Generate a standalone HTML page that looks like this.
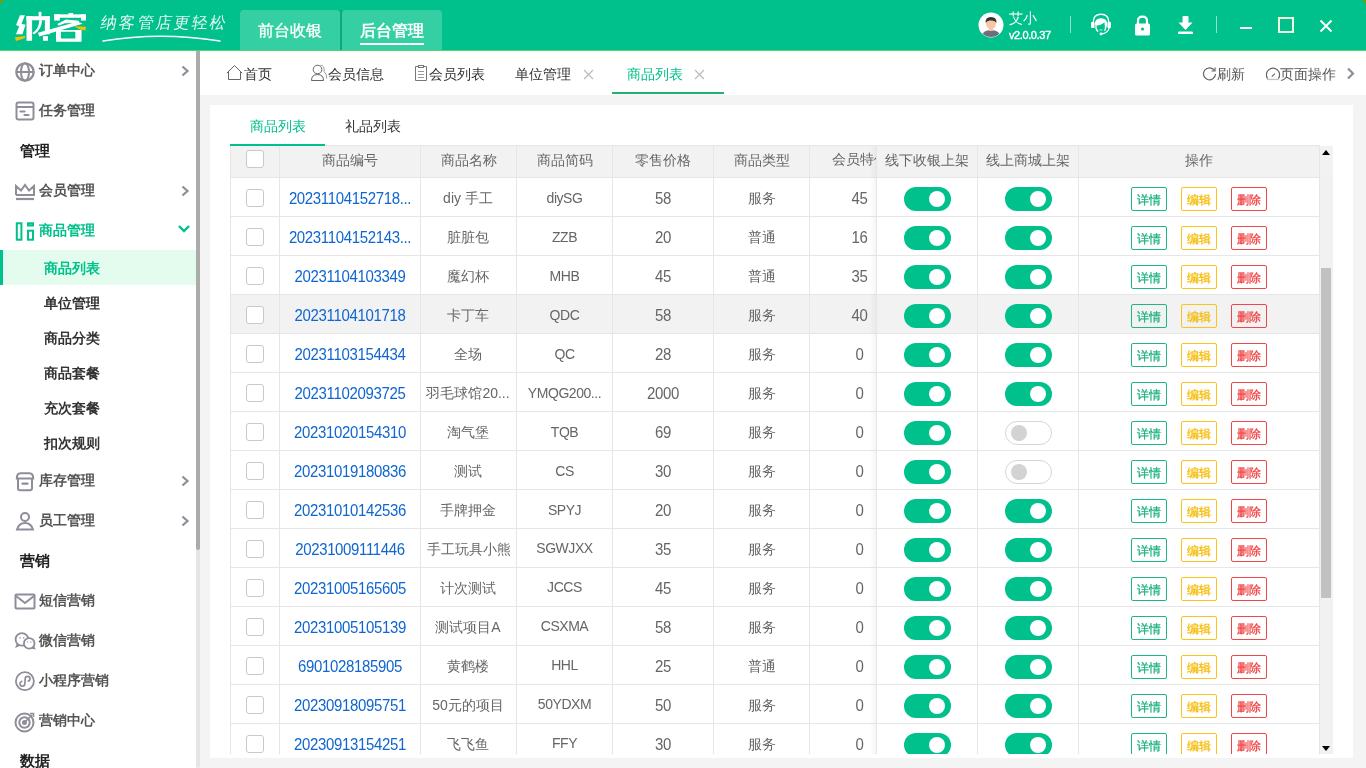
<!DOCTYPE html><html><head><meta charset="utf-8"><style>
*{box-sizing:border-box;margin:0;padding:0}
html,body{width:1366px;height:768px;overflow:hidden;background:#F4F4F4;font-family:"Liberation Sans", sans-serif;}
.a{position:absolute}
.t{position:absolute;white-space:nowrap;line-height:1}
.c{position:absolute;white-space:nowrap;overflow:hidden;text-align:center;font-size:14px;color:#666;height:38px;line-height:40px}
.n{font-size:15px;letter-spacing:-0.35px;transform:scaleY(1.1)}
.id{color:#1066D0}
.hd{position:absolute;white-space:nowrap;overflow:hidden;text-align:center;font-size:14px;color:#666;height:31px;line-height:29px;top:146px}
.cb{position:absolute;width:18px;height:18px;border:1px solid #C9C9C9;border-radius:3px;background:#fff;left:246px}
.sw{position:absolute;width:47px;height:24px;border-radius:12px;background:#00C08B}
.sw i{position:absolute;left:25px;top:4px;width:16px;height:16px;border-radius:50%;background:#fff}
.sw.off{background:#fff;border:1px solid #D6D6D6}
.sw.off i{left:5px;top:3px;background:#D3D3D3}
.bt{position:absolute;width:36px;height:24px;border:1px solid;border-radius:2px;font-size:12px;line-height:24px;text-align:center;-webkit-text-stroke:0.25px currentColor}
.b1{color:#16B07C;border-color:#1DB784}
.b2{color:#F6BA00;border-color:#F9C51A}
.b3{color:#F03A3A;border-color:#F04848}
</style></head><body><div style="position:absolute;left:0;top:0;width:1366px;height:768px;will-change:transform"><div class="a" style="left:0;top:0;width:1366px;height:50px;background:#00C08B"></div>
<div class="a" style="left:0;top:50px;width:1366px;height:1px;background:#52D46A"></div>
<div class="a" style="left:240px;top:10px;width:100px;height:40px;background:#34D0A3;border-radius:4px 4px 0 0"></div>
<div class="a" style="left:340px;top:10px;width:2px;height:40px;background:#12A67F"></div>
<div class="a" style="left:342px;top:10px;width:100px;height:40px;background:#34D0A3;border-radius:4px 4px 0 0"></div>
<div class="t" style="left:258px;top:23px;font-size:16px;color:#fff;-webkit-text-stroke:0.3px #fff">前台收银</div>
<div class="t" style="left:360px;top:23px;font-size:16px;color:#fff;font-weight:bold">后台管理</div>
<div class="a" style="left:360px;top:43px;width:64px;height:2px;background:#fff"></div>
<svg class="a" style="left:0;top:0" width="5" height="5" viewBox="0 0 5 5"><path d="M0 0 H4 L3 1 L2 1.5 L1 3 L0 4 Z" fill="#7F9800"/></svg>
<svg class="a" style="left:1361px;top:0" width="5" height="5" viewBox="0 0 5 5"><path d="M5 0 H1 L2 1 L3 1.5 L4 3 L5 4 Z" fill="#7F9800"/></svg>
<svg class="a" style="left:10px;top:5px" width="85" height="43" viewBox="0 0 1366 691"><g fill="#fff"><polygon points="160,165 240,165 185,300 250,318 200,472 95,472 148,345 98,322"/><rect x="265" y="180" width="90" height="395"/><rect x="265" y="180" width="375" height="65"/><rect x="460" y="110" width="45" height="135"/><rect x="560" y="180" width="80" height="290"/><rect x="530" y="500" width="80" height="75"/><path d="M470 245 Q470 380 360 450 L390 470 Q510 390 515 245 Z"/><rect x="940" y="128" width="75" height="40"/><rect x="710" y="150" width="510" height="55"/><rect x="710" y="150" width="90" height="100"/><rect x="1140" y="150" width="80" height="100"/><polygon points="760,305 900,235 1110,255 1105,290 880,295 785,335"/><polygon points="450,445 1090,265 1165,300 470,505"/><path d="M740 400 H1150 V590 H740 Z M820 430 V540 H1050 V430 Z" fill-rule="evenodd"/></g><g fill="#F6C000"><polygon points="80,520 245,500 235,535 95,580"/><polygon points="1030,340 1220,350 1212,410 1120,395"/></g></svg>
<div class="t" style="left:101px;top:15px;font-size:16px;color:#fff;letter-spacing:2.2px;opacity:0.9;transform:skewX(-10deg);transform-origin:0 50%">纳客管店更轻松</div>
<svg class="a" style="left:100px;top:33px" width="125" height="10" viewBox="0 0 125 10"><path d="M3 8 Q60 -1.5 120 8" stroke="#fff" stroke-width="1.5" fill="none" stroke-linecap="round"/></svg>
<svg class="a" style="left:978px;top:12px" width="26" height="26" viewBox="0 0 26 26"><circle cx="13" cy="13" r="12.5" fill="#fff"/><clipPath id="av"><circle cx="13" cy="13" r="12"/></clipPath><g clip-path="url(#av)"><path d="M3 26 Q4 18 13 18 Q22 18 23 26 Z" fill="#6E6E80"/><rect x="11" y="15" width="4" height="4" fill="#F2C4A0"/><ellipse cx="13" cy="11.5" rx="5" ry="5.5" fill="#F5C7A3"/><path d="M7.6 11 Q7 5 13 5 Q19 5 18.4 11 Q17 8 13 8.5 Q9 8 7.6 11Z" fill="#333"/></g></svg>
<div class="t" style="left:1009px;top:11px;font-size:14px;color:#fff">艾小</div>
<div class="t" style="left:1009px;top:30px;font-size:11px;color:#fff;-webkit-text-stroke:0.4px #fff;letter-spacing:-0.4px">v2.0.0.37</div>
<div class="a" style="left:1070px;top:16px;width:1px;height:17px;background:rgba(255,255,255,0.55)"></div>
<div class="a" style="left:1216px;top:16px;width:1px;height:17px;background:rgba(255,255,255,0.55)"></div>
<svg class="a" style="left:1085px;top:10px" width="32" height="30" viewBox="0 0 32 30" fill="none" stroke="#fff"><path d="M8.3 12 Q8.3 4.2 16 4.2 Q23.7 4.2 23.7 12" stroke-width="1.4"/><rect x="6" y="12" width="3.6" height="6" rx="1" fill="#fff" stroke="none"/><rect x="22.4" y="12" width="3.6" height="6" rx="1" fill="#fff" stroke="none"/><path d="M9.8 14.5 Q9.8 8.3 16 8.3 Q22.2 8.3 22.2 14.5 L20.8 19.5 Q20.3 15 19.3 12.3 Q17 15.2 11 15.8 Z" fill="#fff" stroke="none"/><path d="M11 15.5 Q10.6 19.8 13.2 21.6" stroke-width="1.3"/><path d="M20.3 14 Q21 19 19.6 20.8" stroke-width="1.3"/><path d="M14.4 19.8 Q16 20.6 17.6 19.8" stroke-width="0.7"/><path d="M24.2 17.5 Q23.5 23.2 16.2 24" stroke-width="1.3"/><circle cx="16" cy="24" r="1.4" fill="#fff" stroke="none"/></svg>
<svg class="a" style="left:1134px;top:15px" width="17" height="21" viewBox="0 0 17 21"><path d="M4 9 V6 Q4 1.6 8.5 1.6 Q13 1.6 13 6 V9" stroke="#fff" stroke-width="2.2" fill="none"/><rect x="1" y="8.5" width="15" height="12" rx="1.5" fill="#fff"/><circle cx="8.5" cy="14" r="1.6" fill="#00C08B"/></svg>
<svg class="a" style="left:1177px;top:15px" width="17" height="20" viewBox="0 0 17 20" fill="#fff"><rect x="5.5" y="1" width="6" height="7" rx="1"/><path d="M1.5 7.5 H15.5 L8.5 15 Z"/><rect x="1" y="16.5" width="15" height="2.6" rx="1.2"/></svg>
<div class="a" style="left:1240px;top:27px;width:12px;height:2px;background:#fff"></div>
<div class="a" style="left:1278px;top:17px;width:16px;height:16px;border:2px solid #F3F9DA"></div>
<svg class="a" style="left:1319px;top:19px" width="14" height="14" viewBox="0 0 14 14" stroke="#fff" stroke-width="2"><path d="M1.5 1.5 L12.5 12.5 M12.5 1.5 L1.5 12.5"/></svg>
<div class="a" style="left:0;top:51px;width:196px;height:717px;background:#fff"></div>
<div class="a" style="left:196px;top:51px;width:4px;height:717px;background:#E5E5E5;border-radius:2px"></div>
<div class="a" style="left:196px;top:51px;width:4px;height:499px;background:#ABABAB;border-radius:0 0 2px 2px"></div>
<svg class="a" style="left:15px;top:62px" width="20" height="20" viewBox="0 0 20 20" fill="none" stroke="#8E8D99" stroke-width="2"><circle cx="10" cy="10" r="8.7" stroke-width="2.3"/><ellipse cx="10" cy="10" rx="4" ry="8.7" stroke-width="2"/><path d="M1.5 10 H18.5" stroke-width="2"/></svg>
<div class="t" style="left:39px;top:63px;font-size:14px;color:#555;font-weight:bold">订单中心</div>
<svg class="a" style="left:180px;top:65px" width="10" height="12" viewBox="0 0 10 12" fill="none" stroke="#8E8D99" stroke-width="2.2"><path d="M2.5 1.5 L7.5 6 L2.5 10.5"/></svg>
<svg class="a" style="left:15px;top:101px" width="20" height="20" viewBox="0 0 20 20" fill="none" stroke="#8E8D99" stroke-width="2"><rect x="1.5" y="1.5" width="17" height="17" rx="2"/><path d="M1.5 6 H18.5"/><path d="M5.5 10.5 H9.5" stroke-width="2.2" stroke-linecap="round"/><path d="M9.5 14 H13.5" stroke-width="2.2" stroke-linecap="round"/></svg>
<div class="t" style="left:39px;top:103px;font-size:14px;color:#555;font-weight:bold">任务管理</div>
<div class="t" style="left:20px;top:143px;font-size:15px;color:#222;font-weight:bold">管理</div>
<svg class="a" style="left:14px;top:183px" width="22" height="18" viewBox="0 0 22 18" fill="none" stroke="#8E8D99" stroke-width="2"><path d="M2 12 V3 L7 7.5 L11 2 L15 7.5 L20 3 V12 H2"/><path d="M2 16 H20" stroke-width="2.2"/></svg>
<div class="t" style="left:39px;top:183px;font-size:14px;color:#555;font-weight:bold">会员管理</div>
<svg class="a" style="left:180px;top:185px" width="10" height="12" viewBox="0 0 10 12" fill="none" stroke="#8E8D99" stroke-width="2.2"><path d="M2.5 1.5 L7.5 6 L2.5 10.5"/></svg>
<svg class="a" style="left:15px;top:221px" width="20" height="21" viewBox="0 0 20 21" fill="none" stroke="#00C08B" stroke-width="2"><rect x="1.8" y="2.3" width="4.6" height="16.4"/><rect x="13" y="2.3" width="5" height="2.2"/><rect x="13" y="9.7" width="5" height="9"/></svg>
<div class="t" style="left:39px;top:223px;font-size:14px;color:#00C08B;font-weight:bold">商品管理</div>
<svg class="a" style="left:177px;top:224px" width="14" height="10" viewBox="0 0 14 10" fill="none" stroke="#00C08B" stroke-width="2.4"><path d="M2 2 L7 7 L12 2"/></svg>
<div class="a" style="left:0;top:250px;width:196px;height:35px;background:#E3FCEE"></div>
<div class="a" style="left:0;top:250px;width:3px;height:35px;background:#00C08B"></div>
<div class="t" style="left:44px;top:261px;font-size:14px;color:#00C08B;font-weight:bold">商品列表</div>
<div class="t" style="left:44px;top:296px;font-size:14px;color:#333;font-weight:bold">单位管理</div>
<div class="t" style="left:44px;top:331px;font-size:14px;color:#333;font-weight:bold">商品分类</div>
<div class="t" style="left:44px;top:366px;font-size:14px;color:#333;font-weight:bold">商品套餐</div>
<div class="t" style="left:44px;top:401px;font-size:14px;color:#333;font-weight:bold">充次套餐</div>
<div class="t" style="left:44px;top:436px;font-size:14px;color:#333;font-weight:bold">扣次规则</div>
<svg class="a" style="left:15px;top:471px" width="20" height="21" viewBox="0 0 20 21" fill="none" stroke="#8E8D99" stroke-width="2"><path d="M1.8 7.6 Q1.8 2.2 5.5 2.2 H14.5 Q18.2 2.2 18.2 7.6 Z"/><path d="M3 7.6 V17.2 Q3 19.2 5 19.2 H15 Q17 19.2 17 17.2 V7.6"/><path d="M7.6 12.6 H12.4" stroke-width="2.4" stroke-linecap="round"/></svg>
<div class="t" style="left:39px;top:473px;font-size:14px;color:#555;font-weight:bold">库存管理</div>
<svg class="a" style="left:180px;top:475px" width="10" height="12" viewBox="0 0 10 12" fill="none" stroke="#8E8D99" stroke-width="2.2"><path d="M2.5 1.5 L7.5 6 L2.5 10.5"/></svg>
<svg class="a" style="left:15px;top:511px" width="20" height="20" viewBox="0 0 20 20" fill="none" stroke="#8E8D99" stroke-width="2"><circle cx="10" cy="6" r="4"/><path d="M2 18.5 Q4 12 10 12 Q16 12 18 18.5 Z"/></svg>
<div class="t" style="left:39px;top:513px;font-size:14px;color:#555;font-weight:bold">员工管理</div>
<svg class="a" style="left:180px;top:515px" width="10" height="12" viewBox="0 0 10 12" fill="none" stroke="#8E8D99" stroke-width="2.2"><path d="M2.5 1.5 L7.5 6 L2.5 10.5"/></svg>
<div class="t" style="left:20px;top:553px;font-size:15px;color:#222;font-weight:bold">营销</div>
<svg class="a" style="left:14px;top:593px" width="22" height="17" viewBox="0 0 22 17" fill="none" stroke="#8E8D99" stroke-width="2"><rect x="1.5" y="1.5" width="19" height="14" rx="1"/><path d="M2 3 L11 10 L20 3"/></svg>
<div class="t" style="left:39px;top:593px;font-size:14px;color:#555;font-weight:bold">短信营销</div>
<svg class="a" style="left:14px;top:631px" width="22" height="19" viewBox="0 0 22 19" fill="none" stroke="#8E8D99" stroke-width="2"><circle cx="7.9" cy="8.4" r="6.3" stroke-width="1.8"/><path d="M3.5 13 L2.5 15.5 L6 14" stroke-width="1.6"/><circle cx="15.2" cy="12.4" r="5.3" fill="#fff" stroke-width="1.8"/><path d="M19.5 15.5 L20.5 17.5 L18 17" stroke-width="1.5"/><path d="M5.5 6.8 H6.8 M9 6.8 H10.3 M13 11 H14.2 M16.3 11 H17.5" stroke-width="1.2"/></svg>
<div class="t" style="left:39px;top:633px;font-size:14px;color:#555;font-weight:bold">微信营销</div>
<svg class="a" style="left:14px;top:670px" width="22" height="22" viewBox="0 0 22 22" fill="none" stroke="#8E8D99" stroke-width="2"><circle cx="10.9" cy="11.2" r="9" stroke-width="1.8"/><path d="M8.4 11.3 A2.4 2.4 0 1 0 10.8 13.7 L11.2 8.8 A2.4 2.4 0 1 1 13.6 11.2" stroke-width="1.7"/></svg>
<div class="t" style="left:39px;top:673px;font-size:14px;color:#555;font-weight:bold">小程序营销</div>
<svg class="a" style="left:14px;top:711px" width="22" height="22" viewBox="0 0 22 22" fill="none" stroke="#8E8D99" stroke-width="2"><circle cx="10.5" cy="11.5" r="9"/><circle cx="10.5" cy="11.5" r="5.2"/><circle cx="10.5" cy="11.5" r="1.5" fill="#8E8D99"/><path d="M10.5 11.5 L18 4" stroke-width="1.6"/><path d="M16 2.5 L19.5 2.5 L19.5 6" stroke-width="1.6"/></svg>
<div class="t" style="left:39px;top:713px;font-size:14px;color:#555;font-weight:bold">营销中心</div>
<div class="t" style="left:20px;top:753px;font-size:15px;color:#222;font-weight:bold">数据</div>
<div class="a" style="left:200px;top:51px;width:1166px;height:44px;background:#fff"></div>
<svg class="a" style="left:226px;top:64px" width="18" height="17" viewBox="0 0 18 17" fill="none" stroke="#666" stroke-width="1"><path d="M0.8 9.2 L8.5 1.5 L16.2 9.2"/><path d="M2.5 7.5 V15.5 H14.5 V7.5"/></svg>
<div class="t" style="left:244px;top:67px;font-size:14px;color:#333">首页</div>
<svg class="a" style="left:310px;top:64px" width="18" height="17" viewBox="0 0 18 17" fill="none" stroke="#666" stroke-width="1"><circle cx="7.5" cy="5.5" r="4.3"/><path d="M1.5 16.5 Q1.5 10.5 7.5 10.5 Q13.5 10.5 13.5 16.5 Z"/><path d="M10.5 1.3 Q15 1.5 14 7.5 Q16.8 10 16.8 14.5" stroke="#999"/></svg>
<div class="t" style="left:328px;top:67px;font-size:14px;color:#333">会员信息</div>
<svg class="a" style="left:414px;top:64px" width="14" height="17" viewBox="0 0 14 17" fill="none" stroke="#777" stroke-width="1"><path d="M4 2.5 H1.5 V16.5 H12.5 V2.5 H10"/><rect x="4.5" y="1.5" width="5" height="2"/><path d="M4 7.5 H10 M4 10.5 H10 M4 13.5 H10" stroke="#999"/></svg>
<div class="t" style="left:429px;top:67px;font-size:14px;color:#333">会员列表</div>
<div class="t" style="left:515px;top:67px;font-size:14px;color:#333">单位管理</div>
<svg class="a" style="left:583px;top:69px" width="11" height="11" viewBox="0 0 11 11" stroke="#BBB" stroke-width="1.2"><path d="M1 1 L10 10 M10 1 L1 10"/></svg>
<div class="t" style="left:627px;top:67px;font-size:14px;color:#00C08B">商品列表</div>
<svg class="a" style="left:694px;top:69px" width="11" height="11" viewBox="0 0 11 11" stroke="#BBB" stroke-width="1.2"><path d="M1 1 L10 10 M10 1 L1 10"/></svg>
<div class="a" style="left:612px;top:92px;width:112px;height:2px;background:#1DB36E"></div>
<svg class="a" style="left:1202px;top:66px" width="15" height="15" viewBox="0 0 15 15" fill="none" stroke="#666" stroke-width="1.2"><path d="M12.5 4.5 A6 6 0 1 0 13.5 8"/><path d="M13 1.5 V5 H9.5"/></svg>
<div class="t" style="left:1217px;top:67px;font-size:14px;color:#555">刷新</div>
<svg class="a" style="left:1265px;top:66px" width="16" height="15" viewBox="0 0 16 15" fill="none" stroke="#666" stroke-width="1.2"><path d="M2.6 12.6 A6.6 6.6 0 1 1 13.4 12.6"/><path d="M2 13.4 H14" stroke="#c4c4c4" stroke-width="1.4"/><path d="M6.8 10.6 L10 7.6"/></svg>
<div class="t" style="left:1280px;top:67px;font-size:14px;color:#555">页面操作</div>
<svg class="a" style="left:1345px;top:67px" width="11" height="13" viewBox="0 0 11 13" fill="none" stroke="#8E8D99" stroke-width="2.2"><path d="M3 1.5 L8 6.5 L3 11.5"/></svg>
<div class="a" style="left:210px;top:105px;width:1143px;height:653px;background:#fff"></div>
<div class="t" style="left:250px;top:119px;font-size:14px;color:#00C08B">商品列表</div>
<div class="t" style="left:345px;top:119px;font-size:14px;color:#333">礼品列表</div>
<div class="a" style="left:230px;top:146px;width:1090px;height:31px;background:#F2F2F2"></div>
<div class="a" style="left:230px;top:145px;width:1090px;height:1px;background:#E6E6E6"></div>
<div class="a" style="left:230px;top:144px;width:95px;height:2px;background:#00C08B"></div>
<div class="a" style="left:230px;top:295px;width:1090px;height:38px;background:#F2F2F2"></div>
<div class="a" style="left:230px;top:216px;width:1090px;height:1px;background:#E6E6E6"></div>
<div class="a" style="left:230px;top:255px;width:1090px;height:1px;background:#E6E6E6"></div>
<div class="a" style="left:230px;top:294px;width:1090px;height:1px;background:#E6E6E6"></div>
<div class="a" style="left:230px;top:333px;width:1090px;height:1px;background:#E6E6E6"></div>
<div class="a" style="left:230px;top:372px;width:1090px;height:1px;background:#E6E6E6"></div>
<div class="a" style="left:230px;top:411px;width:1090px;height:1px;background:#E6E6E6"></div>
<div class="a" style="left:230px;top:450px;width:1090px;height:1px;background:#E6E6E6"></div>
<div class="a" style="left:230px;top:489px;width:1090px;height:1px;background:#E6E6E6"></div>
<div class="a" style="left:230px;top:528px;width:1090px;height:1px;background:#E6E6E6"></div>
<div class="a" style="left:230px;top:567px;width:1090px;height:1px;background:#E6E6E6"></div>
<div class="a" style="left:230px;top:606px;width:1090px;height:1px;background:#E6E6E6"></div>
<div class="a" style="left:230px;top:645px;width:1090px;height:1px;background:#E6E6E6"></div>
<div class="a" style="left:230px;top:684px;width:1090px;height:1px;background:#E6E6E6"></div>
<div class="a" style="left:230px;top:723px;width:1090px;height:1px;background:#E6E6E6"></div>
<div class="a" style="left:230px;top:177px;width:1090px;height:1px;background:#E6E6E6"></div>
<div class="a" style="left:230px;top:146px;width:1px;height:608px;background:#E6E6E6"></div>
<div class="a" style="left:279px;top:146px;width:1px;height:608px;background:#E6E6E6"></div>
<div class="a" style="left:420px;top:146px;width:1px;height:608px;background:#E6E6E6"></div>
<div class="a" style="left:516px;top:146px;width:1px;height:608px;background:#E6E6E6"></div>
<div class="a" style="left:612px;top:146px;width:1px;height:608px;background:#E6E6E6"></div>
<div class="a" style="left:713px;top:146px;width:1px;height:608px;background:#E6E6E6"></div>
<div class="a" style="left:809px;top:146px;width:1px;height:608px;background:#E6E6E6"></div>
<div class="a" style="left:876px;top:146px;width:1px;height:608px;background:#E6E6E6"></div>
<div class="a" style="left:977px;top:146px;width:1px;height:608px;background:#E6E6E6"></div>
<div class="a" style="left:1078px;top:146px;width:1px;height:608px;background:#E6E6E6"></div>
<div class="a" style="left:1319px;top:146px;width:1px;height:608px;background:#E6E6E6"></div>
<div class="hd" style="left:280px;width:140px">商品编号</div>
<div class="hd" style="left:421px;width:95px">商品名称</div>
<div class="hd" style="left:517px;width:95px">商品简码</div>
<div class="hd" style="left:613px;width:100px">零售价格</div>
<div class="hd" style="left:714px;width:95px">商品类型</div>
<div class="t" style="left:832px;top:152px;font-size:14px;color:#666">会员特价</div>
<div class="cb" style="top:150px"></div>
<div class="a" style="left:870px;top:146px;width:6px;height:608px;background:linear-gradient(to right,rgba(0,0,0,0),rgba(0,0,0,0.04))"></div>
<div class="a" style="left:876px;top:146px;width:443px;height:31px;background:#F2F2F2"></div>
<div class="a" style="left:876px;top:178px;width:443px;height:576px;background:#fff"></div>
<div class="a" style="left:876px;top:295px;width:443px;height:38px;background:#F2F2F2"></div>
<div class="a" style="left:876px;top:177px;width:443px;height:1px;background:#E6E6E6"></div>
<div class="a" style="left:876px;top:216px;width:443px;height:1px;background:#E6E6E6"></div>
<div class="a" style="left:876px;top:255px;width:443px;height:1px;background:#E6E6E6"></div>
<div class="a" style="left:876px;top:294px;width:443px;height:1px;background:#E6E6E6"></div>
<div class="a" style="left:876px;top:333px;width:443px;height:1px;background:#E6E6E6"></div>
<div class="a" style="left:876px;top:372px;width:443px;height:1px;background:#E6E6E6"></div>
<div class="a" style="left:876px;top:411px;width:443px;height:1px;background:#E6E6E6"></div>
<div class="a" style="left:876px;top:450px;width:443px;height:1px;background:#E6E6E6"></div>
<div class="a" style="left:876px;top:489px;width:443px;height:1px;background:#E6E6E6"></div>
<div class="a" style="left:876px;top:528px;width:443px;height:1px;background:#E6E6E6"></div>
<div class="a" style="left:876px;top:567px;width:443px;height:1px;background:#E6E6E6"></div>
<div class="a" style="left:876px;top:606px;width:443px;height:1px;background:#E6E6E6"></div>
<div class="a" style="left:876px;top:645px;width:443px;height:1px;background:#E6E6E6"></div>
<div class="a" style="left:876px;top:684px;width:443px;height:1px;background:#E6E6E6"></div>
<div class="a" style="left:876px;top:723px;width:443px;height:1px;background:#E6E6E6"></div>
<div class="a" style="left:876px;top:146px;width:1px;height:608px;background:#E6E6E6"></div>
<div class="a" style="left:977px;top:146px;width:1px;height:608px;background:#E6E6E6"></div>
<div class="a" style="left:1078px;top:146px;width:1px;height:608px;background:#E6E6E6"></div>
<div class="a" style="left:1319px;top:146px;width:1px;height:608px;background:#E6E6E6"></div>
<div class="hd" style="left:877px;width:100px">线下收银上架</div>
<div class="hd" style="left:978px;width:100px">线上商城上架</div>
<div class="hd" style="left:1079px;width:240px">操作</div>
<div class="cb" style="top:189px"></div>
<div class="c n id" style="left:280px;top:178px;width:140px">20231104152718...</div>
<div class="c" style="left:421px;top:178px;width:94px">diy 手工</div>
<div class="c n" style="left:517px;top:178px;width:95px;font-size:14px;letter-spacing:-0.45px;line-height:38px">diySG</div>
<div class="c n" style="left:613px;top:178px;width:100px">58</div>
<div class="c" style="left:714px;top:178px;width:95px">服务</div>
<div class="c n" style="left:810px;top:178px;width:99px">45</div>
<div class="sw" style="left:904px;top:187px"><i></i></div>
<div class="sw" style="left:1005px;top:187px"><i></i></div>
<div class="bt b1" style="left:1131px;top:187px">详情</div>
<div class="bt b2" style="left:1181px;top:187px">编辑</div>
<div class="bt b3" style="left:1231px;top:187px">删除</div>
<div class="cb" style="top:228px"></div>
<div class="c n id" style="left:280px;top:217px;width:140px">20231104152143...</div>
<div class="c" style="left:421px;top:217px;width:94px">脏脏包</div>
<div class="c n" style="left:517px;top:217px;width:95px;font-size:14px;letter-spacing:-0.45px;line-height:38px">ZZB</div>
<div class="c n" style="left:613px;top:217px;width:100px">20</div>
<div class="c" style="left:714px;top:217px;width:95px">普通</div>
<div class="c n" style="left:810px;top:217px;width:99px">16</div>
<div class="sw" style="left:904px;top:226px"><i></i></div>
<div class="sw" style="left:1005px;top:226px"><i></i></div>
<div class="bt b1" style="left:1131px;top:226px">详情</div>
<div class="bt b2" style="left:1181px;top:226px">编辑</div>
<div class="bt b3" style="left:1231px;top:226px">删除</div>
<div class="cb" style="top:267px"></div>
<div class="c n id" style="left:280px;top:256px;width:140px">20231104103349</div>
<div class="c" style="left:421px;top:256px;width:94px">魔幻杯</div>
<div class="c n" style="left:517px;top:256px;width:95px;font-size:14px;letter-spacing:-0.45px;line-height:38px">MHB</div>
<div class="c n" style="left:613px;top:256px;width:100px">45</div>
<div class="c" style="left:714px;top:256px;width:95px">普通</div>
<div class="c n" style="left:810px;top:256px;width:99px">35</div>
<div class="sw" style="left:904px;top:265px"><i></i></div>
<div class="sw" style="left:1005px;top:265px"><i></i></div>
<div class="bt b1" style="left:1131px;top:265px">详情</div>
<div class="bt b2" style="left:1181px;top:265px">编辑</div>
<div class="bt b3" style="left:1231px;top:265px">删除</div>
<div class="cb" style="top:306px"></div>
<div class="c n id" style="left:280px;top:295px;width:140px">20231104101718</div>
<div class="c" style="left:421px;top:295px;width:94px">卡丁车</div>
<div class="c n" style="left:517px;top:295px;width:95px;font-size:14px;letter-spacing:-0.45px;line-height:38px">QDC</div>
<div class="c n" style="left:613px;top:295px;width:100px">58</div>
<div class="c" style="left:714px;top:295px;width:95px">服务</div>
<div class="c n" style="left:810px;top:295px;width:99px">40</div>
<div class="sw" style="left:904px;top:304px"><i></i></div>
<div class="sw" style="left:1005px;top:304px"><i></i></div>
<div class="bt b1" style="left:1131px;top:304px">详情</div>
<div class="bt b2" style="left:1181px;top:304px">编辑</div>
<div class="bt b3" style="left:1231px;top:304px">删除</div>
<div class="cb" style="top:345px"></div>
<div class="c n id" style="left:280px;top:334px;width:140px">20231103154434</div>
<div class="c" style="left:421px;top:334px;width:94px">全场</div>
<div class="c n" style="left:517px;top:334px;width:95px;font-size:14px;letter-spacing:-0.45px;line-height:38px">QC</div>
<div class="c n" style="left:613px;top:334px;width:100px">28</div>
<div class="c" style="left:714px;top:334px;width:95px">服务</div>
<div class="c n" style="left:810px;top:334px;width:99px">0</div>
<div class="sw" style="left:904px;top:343px"><i></i></div>
<div class="sw" style="left:1005px;top:343px"><i></i></div>
<div class="bt b1" style="left:1131px;top:343px">详情</div>
<div class="bt b2" style="left:1181px;top:343px">编辑</div>
<div class="bt b3" style="left:1231px;top:343px">删除</div>
<div class="cb" style="top:384px"></div>
<div class="c n id" style="left:280px;top:373px;width:140px">20231102093725</div>
<div class="c" style="left:421px;top:373px;width:94px">羽毛球馆20...</div>
<div class="c n" style="left:517px;top:373px;width:95px;font-size:14px;letter-spacing:-0.45px;line-height:38px">YMQG200...</div>
<div class="c n" style="left:613px;top:373px;width:100px">2000</div>
<div class="c" style="left:714px;top:373px;width:95px">服务</div>
<div class="c n" style="left:810px;top:373px;width:99px">0</div>
<div class="sw" style="left:904px;top:382px"><i></i></div>
<div class="sw" style="left:1005px;top:382px"><i></i></div>
<div class="bt b1" style="left:1131px;top:382px">详情</div>
<div class="bt b2" style="left:1181px;top:382px">编辑</div>
<div class="bt b3" style="left:1231px;top:382px">删除</div>
<div class="cb" style="top:423px"></div>
<div class="c n id" style="left:280px;top:412px;width:140px">20231020154310</div>
<div class="c" style="left:421px;top:412px;width:94px">淘气堡</div>
<div class="c n" style="left:517px;top:412px;width:95px;font-size:14px;letter-spacing:-0.45px;line-height:38px">TQB</div>
<div class="c n" style="left:613px;top:412px;width:100px">69</div>
<div class="c" style="left:714px;top:412px;width:95px">服务</div>
<div class="c n" style="left:810px;top:412px;width:99px">0</div>
<div class="sw" style="left:904px;top:421px"><i></i></div>
<div class="sw off" style="left:1005px;top:421px"><i></i></div>
<div class="bt b1" style="left:1131px;top:421px">详情</div>
<div class="bt b2" style="left:1181px;top:421px">编辑</div>
<div class="bt b3" style="left:1231px;top:421px">删除</div>
<div class="cb" style="top:462px"></div>
<div class="c n id" style="left:280px;top:451px;width:140px">20231019180836</div>
<div class="c" style="left:421px;top:451px;width:94px">测试</div>
<div class="c n" style="left:517px;top:451px;width:95px;font-size:14px;letter-spacing:-0.45px;line-height:38px">CS</div>
<div class="c n" style="left:613px;top:451px;width:100px">30</div>
<div class="c" style="left:714px;top:451px;width:95px">服务</div>
<div class="c n" style="left:810px;top:451px;width:99px">0</div>
<div class="sw" style="left:904px;top:460px"><i></i></div>
<div class="sw off" style="left:1005px;top:460px"><i></i></div>
<div class="bt b1" style="left:1131px;top:460px">详情</div>
<div class="bt b2" style="left:1181px;top:460px">编辑</div>
<div class="bt b3" style="left:1231px;top:460px">删除</div>
<div class="cb" style="top:501px"></div>
<div class="c n id" style="left:280px;top:490px;width:140px">20231010142536</div>
<div class="c" style="left:421px;top:490px;width:94px">手牌押金</div>
<div class="c n" style="left:517px;top:490px;width:95px;font-size:14px;letter-spacing:-0.45px;line-height:38px">SPYJ</div>
<div class="c n" style="left:613px;top:490px;width:100px">20</div>
<div class="c" style="left:714px;top:490px;width:95px">服务</div>
<div class="c n" style="left:810px;top:490px;width:99px">0</div>
<div class="sw" style="left:904px;top:499px"><i></i></div>
<div class="sw" style="left:1005px;top:499px"><i></i></div>
<div class="bt b1" style="left:1131px;top:499px">详情</div>
<div class="bt b2" style="left:1181px;top:499px">编辑</div>
<div class="bt b3" style="left:1231px;top:499px">删除</div>
<div class="cb" style="top:540px"></div>
<div class="c n id" style="left:280px;top:529px;width:140px">20231009111446</div>
<div class="c" style="left:427px;top:529px;width:85px;text-align:left">手工玩具小熊</div>
<div class="c n" style="left:517px;top:529px;width:95px;font-size:14px;letter-spacing:-0.45px;line-height:38px">SGWJXX</div>
<div class="c n" style="left:613px;top:529px;width:100px">35</div>
<div class="c" style="left:714px;top:529px;width:95px">服务</div>
<div class="c n" style="left:810px;top:529px;width:99px">0</div>
<div class="sw" style="left:904px;top:538px"><i></i></div>
<div class="sw" style="left:1005px;top:538px"><i></i></div>
<div class="bt b1" style="left:1131px;top:538px">详情</div>
<div class="bt b2" style="left:1181px;top:538px">编辑</div>
<div class="bt b3" style="left:1231px;top:538px">删除</div>
<div class="cb" style="top:579px"></div>
<div class="c n id" style="left:280px;top:568px;width:140px">20231005165605</div>
<div class="c" style="left:421px;top:568px;width:94px">计次测试</div>
<div class="c n" style="left:517px;top:568px;width:95px;font-size:14px;letter-spacing:-0.45px;line-height:38px">JCCS</div>
<div class="c n" style="left:613px;top:568px;width:100px">45</div>
<div class="c" style="left:714px;top:568px;width:95px">服务</div>
<div class="c n" style="left:810px;top:568px;width:99px">0</div>
<div class="sw" style="left:904px;top:577px"><i></i></div>
<div class="sw" style="left:1005px;top:577px"><i></i></div>
<div class="bt b1" style="left:1131px;top:577px">详情</div>
<div class="bt b2" style="left:1181px;top:577px">编辑</div>
<div class="bt b3" style="left:1231px;top:577px">删除</div>
<div class="cb" style="top:618px"></div>
<div class="c n id" style="left:280px;top:607px;width:140px">20231005105139</div>
<div class="c" style="left:421px;top:607px;width:94px">测试项目A</div>
<div class="c n" style="left:517px;top:607px;width:95px;font-size:14px;letter-spacing:-0.45px;line-height:38px">CSXMA</div>
<div class="c n" style="left:613px;top:607px;width:100px">58</div>
<div class="c" style="left:714px;top:607px;width:95px">服务</div>
<div class="c n" style="left:810px;top:607px;width:99px">0</div>
<div class="sw" style="left:904px;top:616px"><i></i></div>
<div class="sw" style="left:1005px;top:616px"><i></i></div>
<div class="bt b1" style="left:1131px;top:616px">详情</div>
<div class="bt b2" style="left:1181px;top:616px">编辑</div>
<div class="bt b3" style="left:1231px;top:616px">删除</div>
<div class="cb" style="top:657px"></div>
<div class="c n id" style="left:280px;top:646px;width:140px">6901028185905</div>
<div class="c" style="left:421px;top:646px;width:94px">黄鹤楼</div>
<div class="c n" style="left:517px;top:646px;width:95px;font-size:14px;letter-spacing:-0.45px;line-height:38px">HHL</div>
<div class="c n" style="left:613px;top:646px;width:100px">25</div>
<div class="c" style="left:714px;top:646px;width:95px">普通</div>
<div class="c n" style="left:810px;top:646px;width:99px">0</div>
<div class="sw" style="left:904px;top:655px"><i></i></div>
<div class="sw" style="left:1005px;top:655px"><i></i></div>
<div class="bt b1" style="left:1131px;top:655px">详情</div>
<div class="bt b2" style="left:1181px;top:655px">编辑</div>
<div class="bt b3" style="left:1231px;top:655px">删除</div>
<div class="cb" style="top:696px"></div>
<div class="c n id" style="left:280px;top:685px;width:140px">20230918095751</div>
<div class="c" style="left:421px;top:685px;width:94px">50元的项目</div>
<div class="c n" style="left:517px;top:685px;width:95px;font-size:14px;letter-spacing:-0.45px;line-height:38px">50YDXM</div>
<div class="c n" style="left:613px;top:685px;width:100px">50</div>
<div class="c" style="left:714px;top:685px;width:95px">服务</div>
<div class="c n" style="left:810px;top:685px;width:99px">0</div>
<div class="sw" style="left:904px;top:694px"><i></i></div>
<div class="sw" style="left:1005px;top:694px"><i></i></div>
<div class="bt b1" style="left:1131px;top:694px">详情</div>
<div class="bt b2" style="left:1181px;top:694px">编辑</div>
<div class="bt b3" style="left:1231px;top:694px">删除</div>
<div class="cb" style="top:735px"></div>
<div class="c n id" style="left:280px;top:724px;width:140px">20230913154251</div>
<div class="c" style="left:421px;top:724px;width:94px">飞飞鱼</div>
<div class="c n" style="left:517px;top:724px;width:95px;font-size:14px;letter-spacing:-0.45px;line-height:38px">FFY</div>
<div class="c n" style="left:613px;top:724px;width:100px">30</div>
<div class="c" style="left:714px;top:724px;width:95px">服务</div>
<div class="c n" style="left:810px;top:724px;width:99px">0</div>
<div class="sw" style="left:904px;top:733px"><i></i></div>
<div class="sw" style="left:1005px;top:733px"><i></i></div>
<div class="bt b1" style="left:1131px;top:733px">详情</div>
<div class="bt b2" style="left:1181px;top:733px">编辑</div>
<div class="bt b3" style="left:1231px;top:733px">删除</div>
<div class="a" style="left:210px;top:754px;width:1143px;height:4px;background:#fff"></div>
<div class="a" style="left:1320px;top:146px;width:13px;height:608px;background:#F1F1F1"></div>
<div class="a" style="left:1320px;top:146px;width:13px;height:31px;background:#F2F2F2"></div>
<div class="a" style="left:1321px;top:268px;width:10px;height:330px;background:#C1C1C1"></div>
<div class="a" style="left:1322px;top:150px;width:0;height:0;border-left:4px solid transparent;border-right:4px solid transparent;border-bottom:5px solid #000"></div>
<div class="a" style="left:1322px;top:746px;width:0;height:0;border-left:4px solid transparent;border-right:4px solid transparent;border-top:5px solid #000"></div>
<div class="a" style="left:200px;top:758px;width:1166px;height:10px;background:#F4F4F4"></div></div></body></html>
